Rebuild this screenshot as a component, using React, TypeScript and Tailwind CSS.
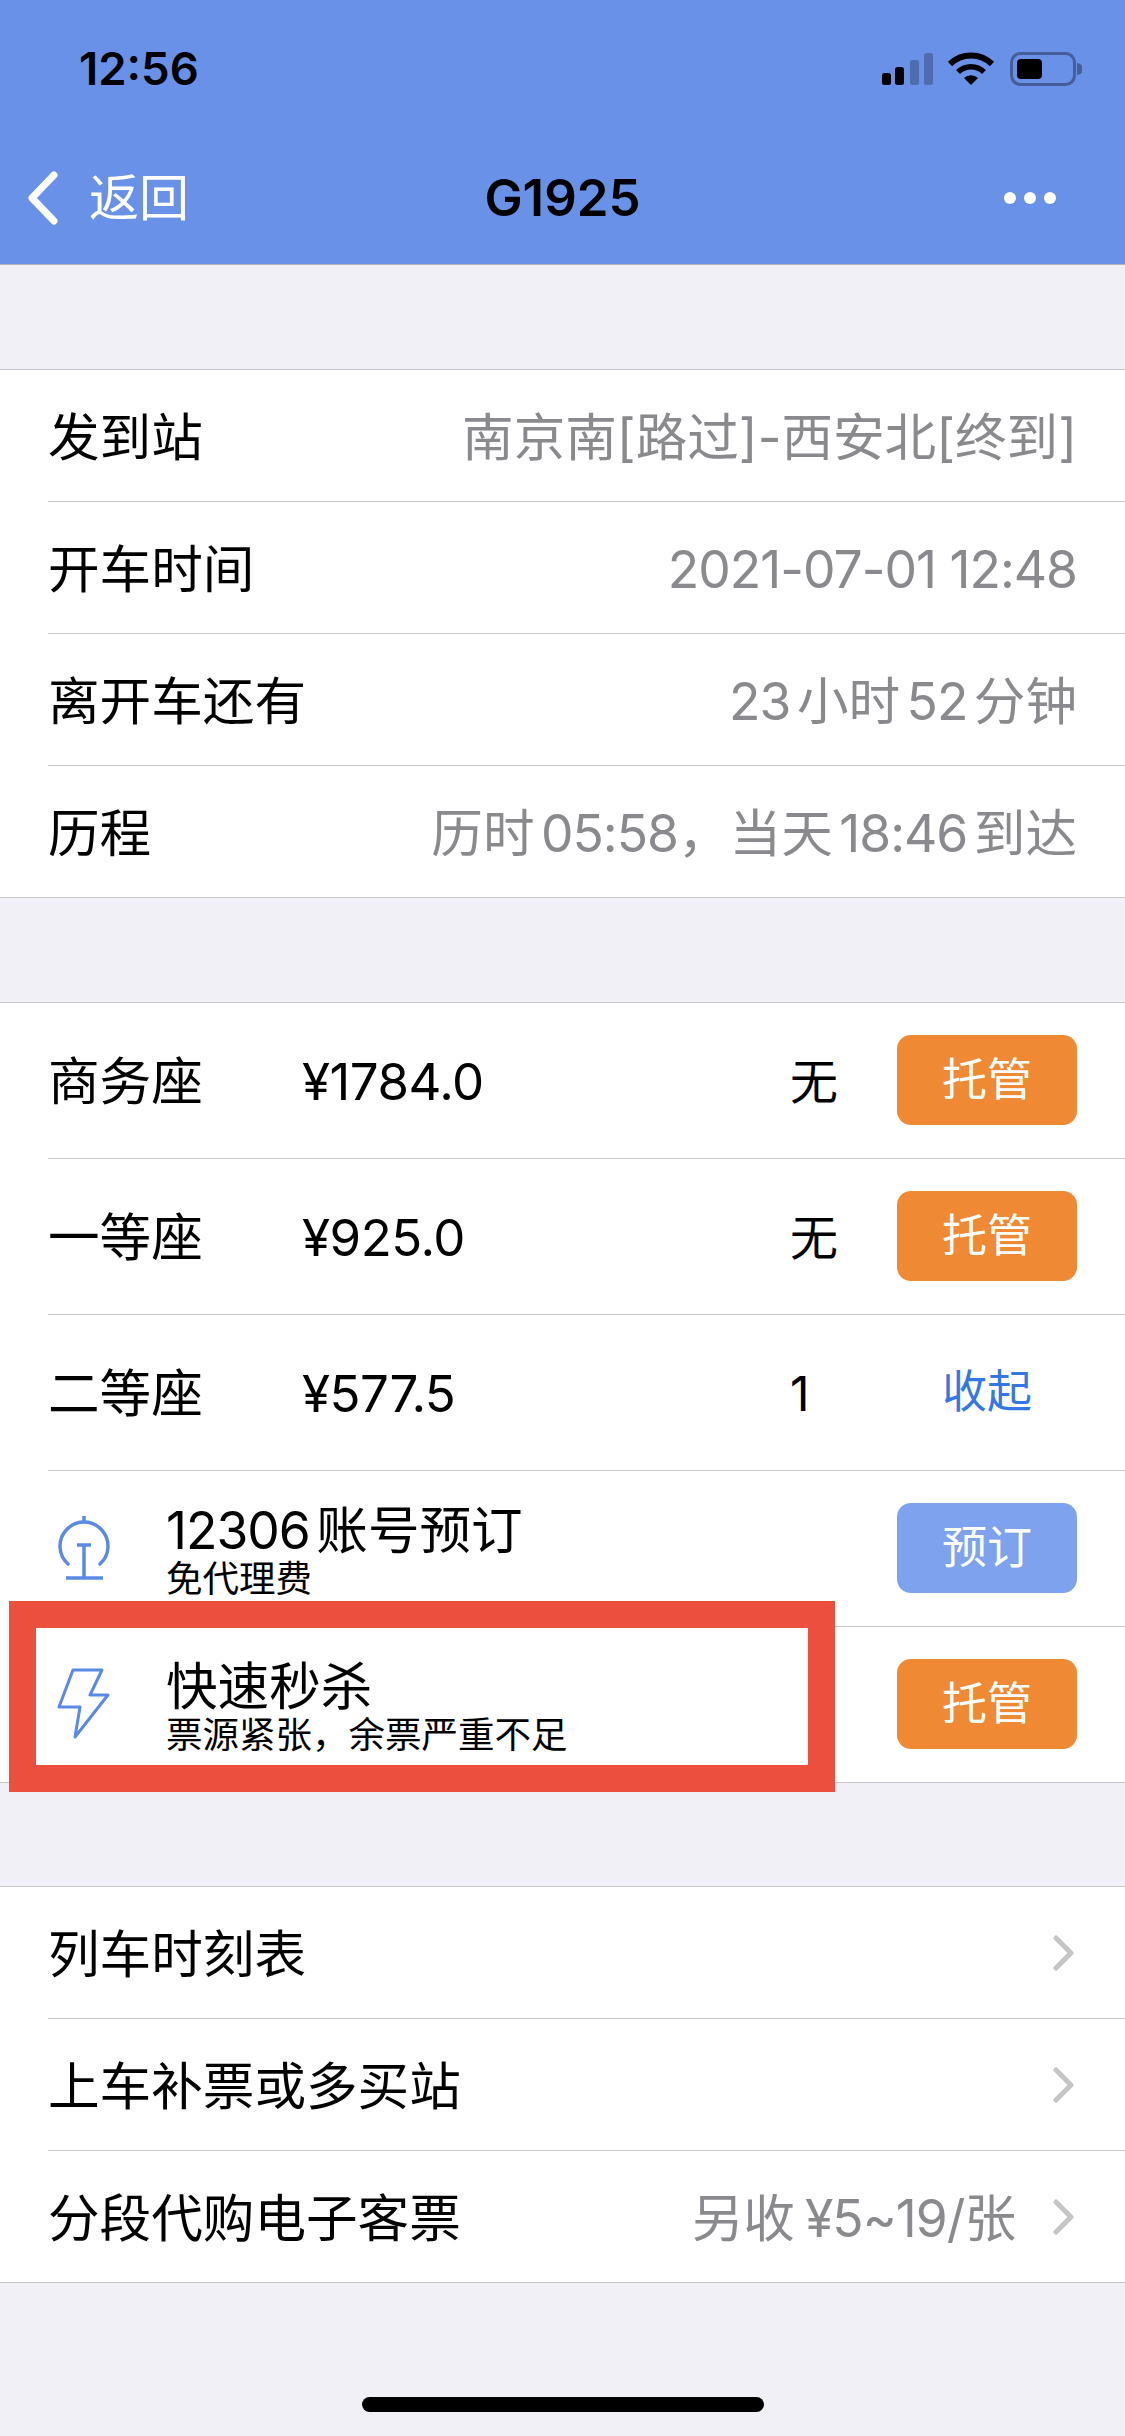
import React from "react";

const font = { fontFamily: 'Inter, "Noto Sans CJK SC", sans-serif' };

function N({ children }: { children: React.ReactNode }) {
  return <span className="tracking-[-1px]">{children}</span>;
}

function Chevron() {
  return (
    <svg width="21" height="36" viewBox="0 0 21 36" className="shrink-0">
      <path d="M3 3 L18 18 L3 33" fill="none" stroke="#C5C5C7" strokeWidth="5" strokeLinecap="round" strokeLinejoin="round" />
    </svg>
  );
}

function InfoRow({ label, value, last }: { label: string; value: React.ReactNode; last?: boolean }) {
  return (
    <div className="pl-12">
      <div className={`flex items-center justify-between pr-12 ${last ? "h-[131px]" : "h-[132px] border-b border-[#C8C7CC]"}`}>
        <span className="text-[51.6px] pt-[5px] text-black">{label}</span>
        <span className="text-[51.6px] pt-[5px] text-[#8A8A8E]">{value}</span>
      </div>
    </div>
  );
}

function Btn({ label, color = "bg-[#F08933]" }: { label: string; color?: string }) {
  return (
    <div className={`w-[180px] h-[90px] rounded-[14px] ${color} text-white text-[45px] flex items-center justify-center shrink-0`}>{label}</div>
  );
}

function SeatRow({ name, price, count, action }: { name: string; price: string; count: string; action: React.ReactNode }) {
  return (
    <div className="pl-12">
      <div className="h-[156px] flex items-center pr-12 pb-[2px] border-b border-[#C8C7CC]">
        <span className="text-[51.6px] pt-[5px] w-[254px] text-black">{name}</span>
        <span className="text-[51px] pt-[5px] flex-1 text-black tracking-[-0.5px]">{price}</span>
        <span className="text-[48px] pt-[5px] w-[107px] text-black">{count}</span>
        {action}
      </div>
    </div>
  );
}

function FeatureRow({ icon, title, sub, action, last }: { icon: React.ReactNode; title: React.ReactNode; sub: string; action: React.ReactNode; last?: boolean }) {
  return (
    <div className="pl-12">
      <div className={`flex items-center pr-12 pb-[2px] ${last ? "h-[155px]" : "h-[156px] border-b border-[#C8C7CC]"}`}>
        <div className="w-[118px] shrink-0 pl-[9px] flex items-center">{icon}</div>
        <div className="flex-1 flex flex-col pt-[8px]">
          <span className="text-[51.6px] leading-[55px] text-black">{title}</span>
          <span className="text-[36.5px] leading-[42px] text-black">{sub}</span>
        </div>
        {action}
      </div>
    </div>
  );
}

function NavRow({ label, value, last }: { label: string; value?: React.ReactNode; last?: boolean }) {
  return (
    <div className="pl-12">
      <div className={`flex items-center pr-[51px] ${last ? "h-[131px]" : "h-[132px] border-b border-[#C8C7CC]"}`}>
        <span className="text-[51.6px] pt-[5px] text-black flex-1">{label}</span>
        {value && <span className="text-[51.6px] pt-[5px] text-[#8A8A8E] mr-[37px]">{value}</span>}
        <Chevron />
      </div>
    </div>
  );
}

export default function App() {
  return (
    <div className="w-[1125px] h-[2436px] bg-[#F0F0F6] relative overflow-hidden flex flex-col [text-autospace:normal]" style={font}>
      <header className="h-[265px] bg-[#6A91E8] border-b border-[#B0B4BC] shrink-0 flex flex-col">
        <div className="h-[138px] flex items-center justify-between pl-[79px] pr-[43px]">
          <span className="text-[45.5px] leading-[50px] font-semibold text-black">12:56</span>
          <svg width="200" height="34" viewBox="0 0 200 34">
            <rect x="0" y="21" width="9" height="12" rx="2.500" fill="#000" />
            <rect x="13" y="15" width="9" height="18" rx="2.500" fill="#000" />
            <rect x="28" y="8" width="9" height="25" rx="2.500" fill="#000" fillOpacity=".25" />
            <rect x="42" y="1" width="9" height="32" rx="2.500" fill="#000" fillOpacity=".25" />
            <path d="M68 12 A30 30 0 0 1 110 12" fill="none" stroke="#000" strokeWidth="6" />
            <path d="M76 20 A18.500 18.500 0 0 1 102 20" fill="none" stroke="#000" strokeWidth="5.500" />
            <path d="M89 33 L82 26 A10 10 0 0 1 96 26 Z" fill="#000" />
            <rect x="129.500" y="1.500" width="63" height="31" rx="9" fill="none" stroke="#000" strokeOpacity=".35" strokeWidth="3" />
            <rect x="135" y="7" width="25" height="20" rx="4" fill="#000" />
            <path d="M195 11 A6 6 0 0 1 195 23 Z" fill="#000" fillOpacity=".35" />
          </svg>
        </div>
        <div className="flex-1 flex items-center justify-between relative pl-[27px] pr-[69px] pb-[6px]">
          <div className="flex items-center gap-[26px] text-white text-[50px]">
            <svg width="36" height="56" viewBox="0 0 36 56">
              <path d="M27 5 L5 28 L27 51" fill="none" stroke="#fff" strokeWidth="7" strokeLinecap="round" strokeLinejoin="round" />
            </svg>
            <span>返回</span>
          </div>
          <span className="absolute left-0 right-0 text-center text-[51px] font-semibold text-black pointer-events-none">G1925</span>
          <div className="flex gap-2">
            <span className="w-3 h-3 rounded-full bg-white" />
            <span className="w-3 h-3 rounded-full bg-white" />
            <span className="w-3 h-3 rounded-full bg-white" />
          </div>
        </div>
      </header>

      <section className="mt-[104px] bg-white border-y border-[#C8C7CC]">
        <InfoRow label="发到站" value="南京南[路过]-西安北[终到]" />
        <InfoRow label="开车时间" value={<N>2021-07-01 12:48</N>} />
        <InfoRow label="离开车还有" value={<><N>23</N>小时<N>52</N>分钟</>} />
        <InfoRow label="历程" value={<>历时<N>05:58</N>，当天<N>18:46</N>到达</>} last />
      </section>

      <section className="mt-[104px] bg-white border-y border-[#C8C7CC]">
        <SeatRow name="商务座" price="¥1784.0" count="无" action={<Btn label="托管" />} />
        <SeatRow name="一等座" price="¥925.0" count="无" action={<Btn label="托管" />} />
        <SeatRow name="二等座" price="¥577.5" count="1" action={<div className="w-[180px] text-center text-[45px] text-[#3478E6] shrink-0">收起</div>} />
        <FeatureRow
          icon={
            <svg width="54" height="64" viewBox="0 0 54 64" fill="none" stroke="#5B8AE6" strokeWidth="3.500">
              <path d="M27 0 V6" />
              <path d="M11 48 A24 24 0 1 1 43 48" strokeLinecap="round" />
              <path d="M20 29 H34 M27 29 V62 M9 62 H46" />
            </svg>
          }
          title={<><N>12306</N>账号预订</>}
          sub="免代理费"
          action={<Btn label="预订" color="bg-[#7FA2EE]" />}
        />
        <FeatureRow
          icon={
            <svg width="54" height="71" viewBox="0 0 54 71" fill="none" stroke="#5B8AE6" strokeWidth="3" strokeLinejoin="round">
              <path d="M16 2 H45 L33 27 H51 L18 69 L23 39 H2 Z" />
            </svg>
          }
          title="快速秒杀"
          sub="票源紧张，余票严重不足"
          action={<Btn label="托管" />}
          last
        />
      </section>

      <section className="mt-[103px] bg-white border-y border-[#C8C7CC]">
        <NavRow label="列车时刻表" />
        <NavRow label="上车补票或多买站" />
        <NavRow label="分段代购电子客票" value={<>另收<span className="ml-[10px]"><N>¥5~19/</N></span>张</>} last />
      </section>

      <div className="absolute left-[9px] top-[1601px] w-[826px] h-[191px] border-[27px] border-[#EC4F3E] pointer-events-none" />
      <div className="absolute left-[362px] bottom-[24px] w-[402px] h-[15px] rounded-full bg-black" />
    </div>
  );
}
